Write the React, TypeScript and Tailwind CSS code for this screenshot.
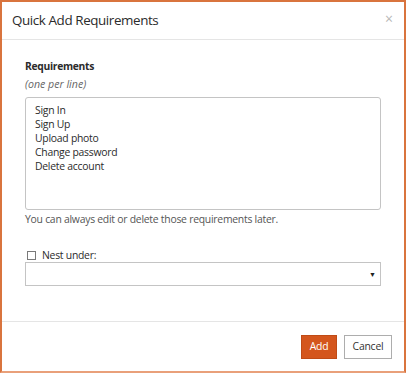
export default function App() {
  const requirements = ["Sign In", "Sign Up", "Upload photo", "Change password", "Delete account"];

  return (
    <div className="w-[406px] h-[373px] bg-white border-2 border-[#d9743e] border-b-[#e9a07a] flex flex-col font-['Open_Sans',sans-serif] text-[#2b2b2b]">
      {/* Header */}
      <div className="h-[38px] shrink-0 border-b border-[#e5e5e5] flex items-center justify-between pl-[10px] pr-[11px]">
        <h3 className="text-[13.4px] tracking-[-0.4px] leading-none">Quick Add Requirements</h3>
        <span className="text-[14px] leading-none text-[#b8b8b8] -mt-[4px]">×</span>
      </div>

      {/* Body */}
      <div className="flex-1 px-[23px] pt-[18px]">
        <p className="text-[10.3px] tracking-[-0.3px] leading-[17px] font-bold">Requirements</p>
        <p className="text-[10.6px] leading-[17px] italic text-[#666] mt-px">(one per line)</p>
        <div className="mt-[4px] h-[113px] w-[356px] border border-[#c4c4c4] rounded-[3px] pl-[9px] pt-[5px] text-[10.4px] tracking-[-0.25px] leading-[14px]">
          {requirements.map((r) => (
            <div key={r}>{r}</div>
          ))}
        </div>
        <p className="text-[10.4px] tracking-[-0.25px] leading-[17px] text-[#555] mt-px">
          You can always edit or delete those requirements later.
        </p>

        <label className="mt-[20px] flex items-center gap-[6px] text-[10.4px] tracking-[-0.25px] leading-[14px]">
          <span className="ml-[2px] w-[9px] h-[9px] border border-[#7a7a7a] bg-white" />
          Nest under:
        </label>
        <div className="h-[24px] w-[356px] border border-[#c4c4c4] flex items-center justify-end pr-[4px]">
          <span className="text-[7px] leading-none text-[#222]">▼</span>
        </div>
      </div>

      {/* Footer */}
      <div className="h-[50px] shrink-0 border-t border-[#e5e5e5] flex items-center justify-end gap-[7px] pr-[12px]">
        <button className="h-[24px] w-[36px] bg-[#d4561d] border border-[#bf4b16] text-white text-[10.4px] tracking-[-0.2px] leading-none">
          Add
        </button>
        <button className="h-[24px] w-[48px] bg-white border border-[#adadad] text-[#333] text-[10.4px] tracking-[-0.2px] leading-none">
          Cancel
        </button>
      </div>
    </div>
  );
}
